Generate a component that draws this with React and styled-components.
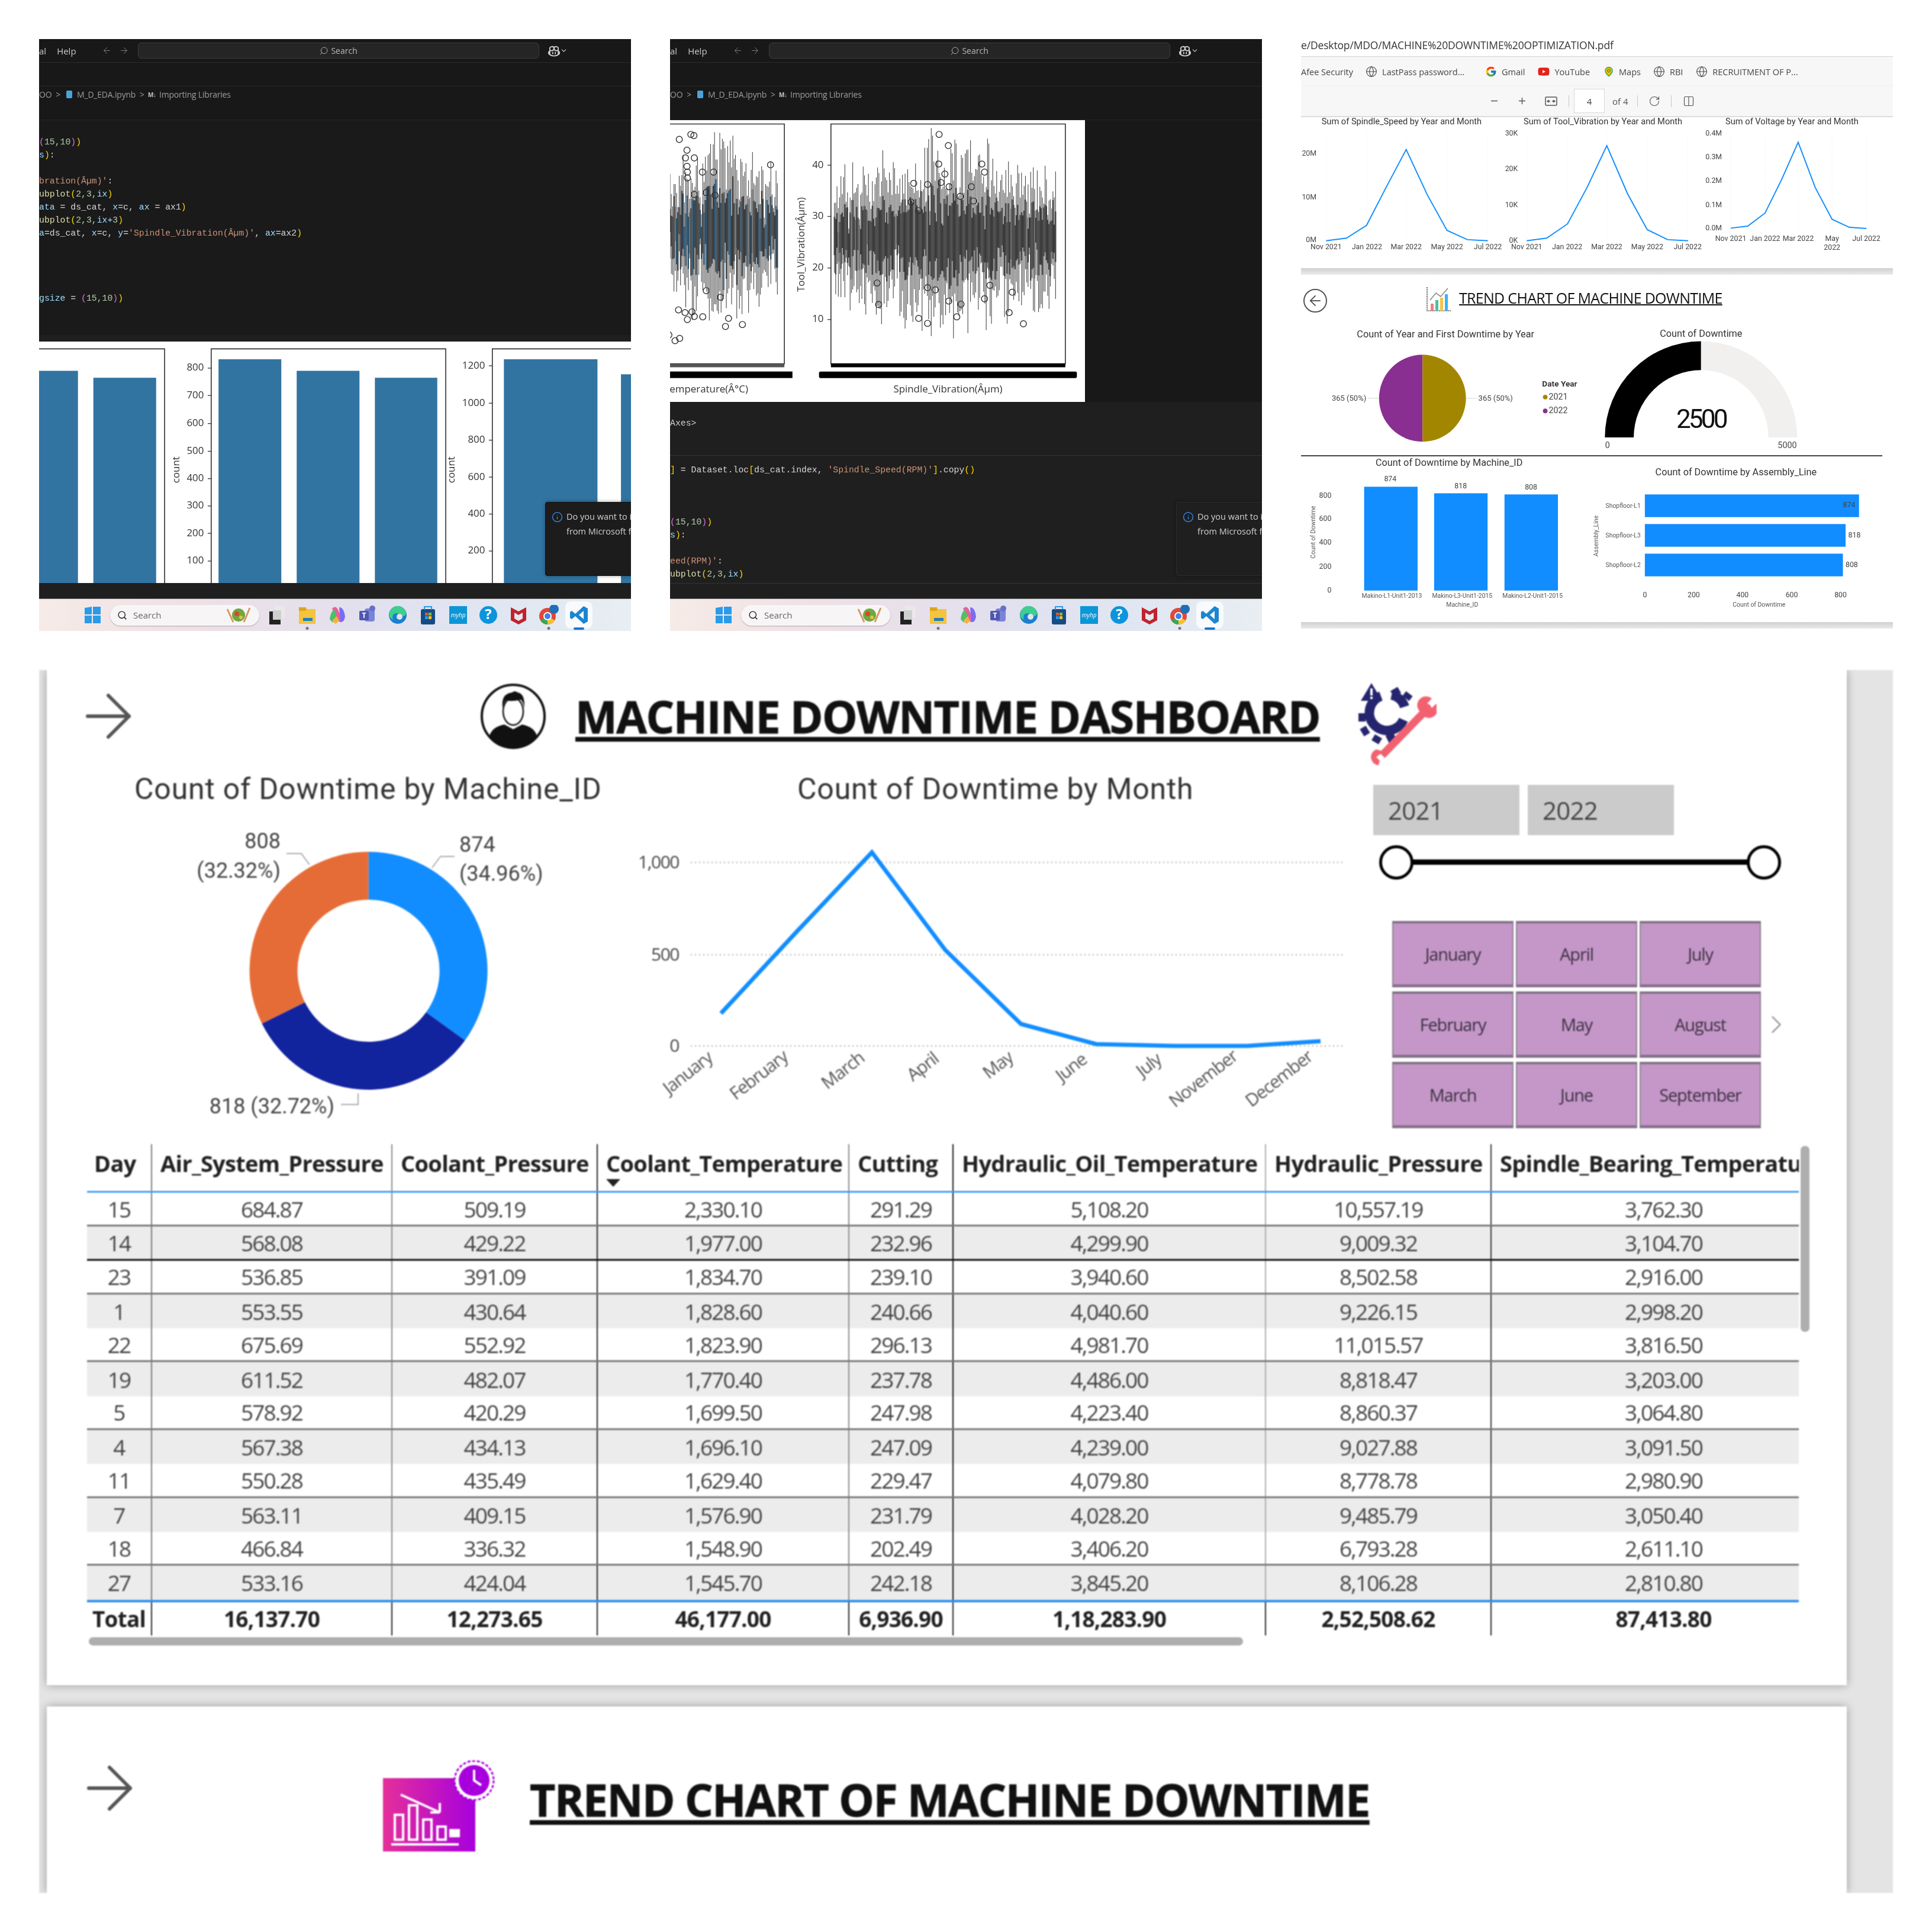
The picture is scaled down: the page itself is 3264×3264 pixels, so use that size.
import React from 'react'
import styled, { createGlobalStyle } from 'styled-components'
import { ArrowRight, ArrowLeft, Search, ChevronDown, ChevronRight, Globe, Minus, Plus, Info, RotateCw, MapPin, Columns2 } from 'lucide-react'
import { VscCopilot } from 'react-icons/vsc'
import { FcGoogle } from 'react-icons/fc'
import { FaYoutube } from 'react-icons/fa'

const GlobalStyle = createGlobalStyle`
  html, body { margin: 0; padding: 0; background: #fff; }
`

const Page = styled.div`
  width: 3264px;
  height: 3264px;
  box-sizing: border-box;
  padding: 66px;
  display: grid;
  grid-template-columns: repeat(3, 1000px);
  grid-template-rows: 1000px 2066px;
  gap: 66px;
  background: #fff;
  font-family: "Open Sans", sans-serif;
`
const Tile = styled.div`
  position: relative;
  overflow: hidden;
  display: flex;
  flex-direction: column;
  background: ${p => p.$bg || '#181818'};
  filter: blur(0.35px);
`

// ---------- vscode window bits ----------
const TitleBar = styled.div`
  height: 40px;
  flex: none;
  box-sizing: border-box;
  display: flex;
  align-items: center;
  color: #c8c8c8;
  font-size: 15px;
  border-bottom: 1px solid #2b2b2b;
`
const MenuText = styled.span`
  margin-left: ${p => p.$gap || 0}px;
`
const NavArrows = styled.div`
  display: flex;
  gap: 12px;
  margin-left: 43px;
  color: #7d7d7d;
`
const SearchBox = styled.div`
  width: 678px;
  height: 27px;
  margin-left: 15px;
  display: flex;
  align-items: center;
  justify-content: center;
  gap: 4px;
  background: #252525;
  border: 1px solid #3c3c3c;
  border-radius: 6px;
  box-sizing: border-box;
  font-size: 14px;
  color: #b8b8b8;
`
const CopilotMenu = styled.div`
  display: flex;
  align-items: center;
  margin-left: 15px;
  color: #cfcfcf;
`
const Blank = styled.div`
  height: 40px;
  flex: none;
  border-bottom: 1px solid #2b2b2b;
  box-sizing: border-box;
`
const Breadcrumb = styled.div`
  height: 57px;
  flex: none;
  box-sizing: border-box;
  padding-bottom: 29px;
  display: flex;
  align-items: center;
  font-size: 14px;
  letter-spacing: -0.2px;
  color: #9d9d9d;
  border-bottom: 1px solid #262626;
  white-space: nowrap;
`
const Crumb = styled.span`
  margin-left: ${p => p.$gap || 0}px;
  display: flex;
  align-items: center;
`
const NotebookIcon = styled.span`
  width: 10px;
  height: 13px;
  border-radius: 2px;
  background: #4aa3d8;
  margin-left: 10px;
`
const MdMark = styled.span`
  font-size: 10px;
  font-weight: 700;
  color: #c8c8c8;
  margin: 0 5px 0 6px;
`
const Editor = styled.div`
  flex: ${p => (p.$fixed ? 'none' : '1')};
  height: ${p => (p.$fixed ? `${p.$fixed}px` : 'auto')};
  box-sizing: border-box;
  padding-top: ${p => p.$top || 0}px;
  background: ${p => p.$bg || '#1a1a1a'};
  border-bottom: ${p => (p.$line ? '1px solid #333' : 'none')};
  overflow: hidden;
`
const CodeLine = styled.div`
  height: 22px;
  line-height: 22px;
  font-family: "Liberation Mono", monospace;
  font-size: 14.8px;
  color: #d4d4d4;
  white-space: pre;
`
const Tok = styled.span`
  color: ${p => p.$c};
`
const DarkStrip = styled.div`
  height: ${p => p.$h}px;
  flex: none;
  background: #1f1f1f;
`
const FigureWrap = styled.div`
  flex: none;
  width: ${p => p.$w}px;
  background: #fff;
`
const ChartSvg = styled.svg`
  display: block;
  flex: none;
  font-family: ${p => p.$font || '"Open Sans", sans-serif'};
  text { dominant-baseline: middle; }
`
const Toast = styled.div`
  position: absolute;
  left: 855px;
  top: 782px;
  width: 200px;
  height: 125px;
  box-sizing: border-box;
  padding: 15px 0 0 10px;
  display: flex;
  gap: 6px;
  background: ${p => p.$bg};
  border: 1px solid ${p => p.$line};
  border-radius: 4px;
  box-shadow: 0 0 6px rgba(0, 0, 0, 0.35);
  color: #cfcfcf;
  font-size: 14.5px;
  line-height: 24.5px;
  white-space: nowrap;
`
const ToastText = styled.div`
  margin-top: -3px;
`

// ---------- taskbar ----------
const TaskBar = styled.div`
  height: 55px;
  flex: none;
  box-sizing: border-box;
  margin-top: auto;
  display: flex;
  align-items: center;
  padding-left: 77px;
  background: linear-gradient(90deg, #f6ebe6 0%, #eee0e6 25%, #e2e0ee 55%, #e0e7f2 80%, #e8eef2 100%);
  border-top: 1px solid #666;
`
const SearchPill = styled.div`
  width: 252px;
  height: 35px;
  margin-left: 16px;
  box-sizing: border-box;
  padding: 0 12px;
  display: flex;
  align-items: center;
  gap: 10px;
  background: #f8f5f7;
  border-radius: 18px;
  box-shadow: 0 1px 2px rgba(0, 0, 0, 0.25);
  font-size: 15px;
  color: #666;
`
const SaladMark = styled.svg`
  margin-left: auto;
`
const TaskIcons = styled.div`
  display: flex;
  gap: 17px;
  margin-left: 13px;
`
const TaskSlot = styled.div`
  position: relative;
  width: 34px;
  height: 34px;
  display: flex;
  align-items: center;
  justify-content: center;
  border-radius: 4px;
  ${p => p.$active && 'background: rgba(255,255,255,.75); box-shadow: 0 0 0 6px rgba(255,255,255,.75);'}
  &::after {
    content: '';
    display: ${p => (p.$dot || p.$active ? 'block' : 'none')};
    position: absolute;
    left: 50%;
    bottom: -8px;
    transform: translateX(-50%);
    width: ${p => (p.$active ? 18 : 5)}px;
    height: ${p => (p.$active ? 4 : 5)}px;
    border-radius: 3px;
    background: ${p => (p.$active ? '#1976d2' : '#777')};
  }
`

const WinLogo = () => (
  <svg width="27" height="28" viewBox="0 0 27 28">
    <path d="M0 2l12-2v13H0zM14 0l13-0v13H14zM0 15h12v13H0zM14 15h13v13H14z" fill="#2a9be8" />
  </svg>
)
const TaskIcon = ({ name }) => {
  const art = {
    view: <><rect x="12" y="2" width="18" height="20" fill="#e9e9e9" /><rect x="4" y="11" width="19" height="22" fill="#222" /><rect x="10" y="9" width="14" height="16" fill="#cfcfcf" /></>,
    folder: <><path d="M3 4h11l3 3h14v25H3z" fill="#f5c33c" /><rect x="3" y="4" width="12" height="6" fill="#dca523" /><rect x="10" y="22" width="16" height="5" fill="#1d7fc4" /></>,
    copilot: <><path d="M8 6q6-6 10 2l8 18q-4 6-10-1z" fill="#e7609c" /><path d="M4 24q2-14 8-16l5 16q-4 6-9 5z" fill="#4fc06a" /><path d="M20 4q8 0 10 16q-2 10-8 9z" fill="#7a6df0" /><path d="M8 27l8-8 4 8-6 5z" fill="#f2b33d" /></>,
    teams: <><rect x="12" y="6" width="17" height="22" rx="4" fill="#7b83d8" /><circle cx="25" cy="6" r="5" fill="#6670c9" /><rect x="3" y="10" width="16" height="16" rx="2" fill="#4f58b0" /><text x="11" y="19" fontSize="12" fontWeight="700" fill="#fff" textAnchor="middle" dominantBaseline="middle">T</text></>,
    edge: <><circle cx="17" cy="17" r="15" fill="#1b7fd0" /><path d="M3 20a14 15 0 0 1 28-6c0 6-8 6-10 3-5-6-16-3-12 8a14 14 0 0 1-6-5z" fill="#3ecf8e" /><circle cx="20" cy="20" r="5" fill="#e0e4f0" /></>,
    store: <><rect x="5" y="7" width="24" height="26" rx="3" fill="#164c86" /><path d="M11 8V3h12v5" fill="none" stroke="#2b9be0" strokeWidth="2" /><rect x="12" y="13" width="5" height="5" fill="#e8532a" /><rect x="18" y="13" width="5" height="5" fill="#7cb83c" /><rect x="12" y="19" width="5" height="5" fill="#2b9be0" /><rect x="18" y="19" width="5" height="5" fill="#f5bd2e" /></>,
    hp: <><rect x="2" y="2" width="30" height="30" fill="#0d96d6" /><text x="17" y="18" fontSize="10" fontStyle="italic" fill="#fff" textAnchor="middle" dominantBaseline="middle">myhp</text></>,
    help: <><circle cx="17" cy="17" r="15" fill="#0d94dc" /><text x="17" y="18" fontSize="24" fontWeight="700" fill="#fff" textAnchor="middle" dominantBaseline="middle">?</text></>,
    mcafee: <path d="M4 4l13 7 13-7v22l-13 7-13-7zM10 13v10l7 4 7-4V13l-7 4z" fill="#c0232c" />,
    chrome: <><circle cx="15" cy="19" r="14" fill="#e0483a" /><path d="M15 19L3 26a14 14 0 0 0 12 7z" fill="#37a853" /><path d="M15 19l12 7a14 14 0 0 1-12 7z" fill="#fbc02d" /><circle cx="15" cy="19" r="7" fill="#fff" /><circle cx="15" cy="19" r="5" fill="#3f7fe8" /><circle cx="26" cy="7" r="8" fill="#1f6fb8" /></>,
    vscode: <><path d="M25 2l7 4v22l-7 4-14-13-6 5-3-2v-10l3-2 6 5zM25 10l-8 7 8 7z" fill="#1b86d1" /></>,
  }
  return <svg width="34" height="34" viewBox="0 0 34 34">{art[name]}</svg>
}

const Taskbar = () => (
  <TaskBar>
    <WinLogo />
    <SearchPill>
      <Search size={17} color="#222" />
      Search
      <SaladMark width="46" height="28" viewBox="0 0 46 28">
        <path d="M4 4l10 22M42 2L32 26" stroke="#d29a63" strokeWidth="3" />
        <circle cx="23" cy="14" r="11" fill="#6fa83e" />
        <circle cx="20" cy="12" r="4" fill="#d9472f" />
        <circle cx="27" cy="18" r="3" fill="#e8c04a" />
      </SaladMark>
    </SearchPill>
    <TaskIcons>
      {['view', 'folder', 'copilot', 'teams', 'edge', 'store', 'hp', 'help', 'mcafee', 'chrome', 'vscode'].map(n => (
        <TaskSlot key={n} $dot={n === 'folder' || n === 'chrome'} $active={n === 'vscode'}>
          <TaskIcon name={n} />
        </TaskSlot>
      ))}
    </TaskIcons>
  </TaskBar>
)

const WindowTop = () => (
  <>
    <TitleBar>
      <MenuText>al</MenuText>
      <MenuText $gap={18}>Help</MenuText>
      <NavArrows>
        <ArrowLeft size={17} strokeWidth={1.4} />
        <ArrowRight size={17} strokeWidth={1.4} />
      </NavArrows>
      <SearchBox>
        <Search size={16} strokeWidth={1.4} style={{ transform: 'scaleX(-1)' }} />
        Search
      </SearchBox>
      <CopilotMenu>
        <VscCopilot size={20} />
        <ChevronDown size={13} />
      </CopilotMenu>
    </TitleBar>
    <Blank />
    <Breadcrumb>
      <Crumb>OO &nbsp;&gt;</Crumb>
      <NotebookIcon />
      <Crumb $gap={8}>M_D_EDA.ipynb &nbsp;&gt;</Crumb>
      <MdMark>M↓</MdMark>
      <Crumb>Importing Libraries</Crumb>
    </Breadcrumb>
  </>
)

const C = { gold: '#ffd700', pink: '#da70d6', blue: '#9cdcfe', fn: '#dcdcaa', str: '#ce9178', num: '#b5cea8', txt: '#d4d4d4', cy: '#4ec9b0' }
const Code = ({ parts }) => (
  <CodeLine>
    {parts.map((p, i) => <Tok key={i} $c={p[1] || C.txt}>{p[0]}</Tok>)}
  </CodeLine>
)

const codeOne = [
  [['(', C.pink], ['15,10', C.num], [')', C.pink], [')', C.gold]],
  [['s', C.blue], [')', C.gold], [':']],
  [[' ']],
  [["bration(Âµm)'", C.str], [':']],
  [['ubplot', C.fn], ['(', C.gold], ['2,3,', C.num], ['ix', C.blue], [')', C.gold]],
  [['ata', C.blue], [' = ds_cat, '], ['x', C.blue], ['=c, '], ['ax', C.blue], [' = ax1'], [')', C.gold]],
  [['ubplot', C.fn], ['(', C.gold], ['2,3,', C.num], ['ix+', C.blue], ['3', C.num], [')', C.gold]],
  [['a', C.blue], ['=ds_cat, '], ['x', C.blue], ['=c, '], ['y', C.blue], ['='], ["'Spindle_Vibration(Âµm)'", C.str], [', '], ['ax', C.blue], ['=ax2'], [')', C.gold]],
  [[' ']], [[' ']], [[' ']], [[' ']],
  [['gsize', C.blue], [' = '], ['(', C.pink], ['15,10', C.num], [')', C.pink], [')', C.gold]],
]
const codeTwo = [
  [[']', C.gold], [' = Dataset.loc'], ['[', C.gold], ['ds_cat.index, '], ["'Spindle_Speed(RPM)'", C.str], [']', C.gold], ['.copy'], ['()', C.gold]],
  [[' ']], [[' ']], [[' ']],
  [['(', C.pink], ['15,10', C.num], [')', C.pink], [')', C.gold]],
  [['s', C.blue], [')', C.gold], [':']],
  [[' ']],
  [["eed(RPM)'", C.str], [':']],
  [['ubplot', C.fn], ['(', C.gold], ['2,3,', C.num], ['ix', C.blue], [')', C.gold]],
]

// ---------- seaborn figures ----------
const BAR = '#3274a1'
const YTick = ({ x, y, label, size = 34 }) => (
  <>
    <line x1={x + 10} x2={x + 20} y1={y} y2={y} stroke="#333" strokeWidth="2" />
    <text x={x} y={y} fontSize={size} fill="#333" textAnchor="end">{label}</text>
  </>
)
const SeabornBars = () => (
  <ChartSvg width="1000" height="408" viewBox="9 795 1537 627">
    <rect x="9" y="795" width="1537" height="627" fill="#fff" />
    <path d="M0 814H335V1422M456 1422V814H1065V1422M1186 1422V814H1546" fill="none" stroke="#333" strokeWidth="2.5" />
    <rect x="9" y="871" width="101" height="551" fill={BAR} />
    <rect x="150" y="889" width="163" height="533" fill={BAR} />
    <rect x="475" y="841" width="163" height="581" fill={BAR} />
    <rect x="678" y="871" width="163" height="551" fill={BAR} />
    <rect x="881" y="889" width="162" height="533" fill={BAR} />
    <rect x="1216" y="841" width="243" height="581" fill={BAR} />
    <rect x="1520" y="880" width="30" height="542" fill={BAR} />
    {[[864, 800], [935, 700], [1008, 600], [1080, 500], [1151, 400], [1222, 300], [1293, 200], [1365, 100]].map(([y, l]) => <YTick key={l} x={437} y={y} label={l} size={26} />)}
    {[[858, 1200], [955, 1000], [1051, 800], [1147, 600], [1243, 400], [1339, 200]].map(([y, l]) => <YTick key={l} x={1167} y={y} label={l} size={26} />)}
    <text transform="translate(367 1128) rotate(-90)" fontSize="26" fill="#333" textAnchor="middle">count</text>
    <text transform="translate(1081 1128) rotate(-90)" fontSize="26" fill="#333" textAnchor="middle">count</text>
  </ChartSvg>
)

const rng = seed => () => {
  seed = (seed + 0x6d2b79f5) | 0
  let t = Math.imul(seed ^ (seed >>> 15), 1 | seed)
  t = (t + Math.imul(t ^ (t >>> 7), 61 | t)) ^ t
  return ((t ^ (t >>> 14)) >>> 0) / 4294967296
}
const makeBoxes = (from, to, mid, spread, seed, tint) => {
  const r = rng(seed)
  const out = []
  for (let x = from; x < to; x += 3.4) {
    const edge = 1 - Math.abs((x - from) / (to - from) - 0.5) * 0.8
    const c = mid + (r() - 0.5) * 60
    const h = (45 + r() * 85) * edge
    const t = c - h - (15 + r() * spread) * edge
    const b = c + h + (15 + r() * spread) * edge
    const light = r() < 0.08
    out.push(
      <g key={x}>
        <line x1={x} x2={x} y1={t} y2={b} stroke="#3d3d3d" strokeWidth="1.6" />
        <rect x={x - 1.7} y={c - h} width="3.4" height={h * 2} fill={light ? '#6e6e6e' : tint && r() > 0.6 ? tint : '#3a3a3a'} />
      </g>
    )
  }
  return out
}
const outL = [[57, 257], [65, 260], [27, 270], [47, 298], [43, 318], [66, 318], [47, 340], [48, 355], [87, 355], [116, 355], [48, 370], [264, 336], [97, 408], [120, 415], [66, 413], [97, 663], [134, 680], [25, 713], [42, 720], [60, 718], [48, 738], [66, 730], [88, 731], [155, 735], [147, 756], [191, 751], [28, 787], [16, 793], [0, 778]]
const outR = [[702, 257], [726, 286], [701, 334], [813, 334], [820, 355], [717, 360], [636, 384], [672, 387], [707, 382], [728, 393], [786, 393], [757, 418], [791, 430], [629, 433], [649, 455], [541, 643], [545, 699], [672, 655], [692, 661], [727, 690], [759, 698], [820, 684], [834, 649], [892, 667], [884, 720], [921, 749], [748, 731], [672, 748], [649, 735]]
const Ring = ({ x, y }) => <circle cx={x} cy={y} r="8" fill="none" stroke="#333" strokeWidth="2.2" />

const BoxFigure = () => (
  <ChartSvg width="701" height="476" viewBox="3 220 1078 732">
    <rect x="3" y="220" width="1078" height="732" fill="#fff" />
    {makeBoxes(3, 285, 510, 140, 7, '#2a4f6a')}
    {makeBoxes(430, 1005, 525, 160, 21)}
    {outL.map(([x, y], i) => <Ring key={i} x={x} y={y} />)}
    {outR.map(([x, y], i) => <Ring key={i} x={x} y={y} />)}
    <path d="M0 230H300V853H0M421 230H1030V853H421z" fill="none" stroke="#333" strokeWidth="2.5" />
    <rect x="3" y="853" width="297" height="9" fill="#555" />
    <rect x="421" y="852" width="609" height="10" fill="#000" />
    <rect x="3" y="873" width="318" height="17" fill="#000" />
    <rect x="390" y="873" width="670" height="17" rx="4" fill="#000" />
    {[[337, 40], [470, 30], [604, 20], [738, 10]].map(([y, l]) => <YTick key={l} x={402} y={y} label={l} size={26} />)}
    <text transform="translate(345 543) rotate(-90)" fontSize="26" fill="#333" textAnchor="middle">Tool_Vibration(Âµm)</text>
    <text x="2" y="921" fontSize="26" fill="#333">emperature(Â°C)</text>
    <text x="725" y="921" fontSize="26" fill="#333" textAnchor="middle">Spindle_Vibration(Âµm)</text>
  </ChartSvg>
)

// ---------- pdf window ----------
const UrlRow = styled.div`
  height: 30px;
  flex: none;
  box-sizing: border-box;
  display: flex;
  align-items: center;
  padding-bottom: 10px;
  font-size: 17.5px;
  letter-spacing: -0.15px;
  color: #333;
  border-bottom: 1px solid #d4d4d4;
  white-space: nowrap;
`
const BookmarkBar = styled.div`
  height: 49px;
  flex: none;
  display: flex;
  align-items: center;
  background: #f7f7f7;
  font-size: 14.5px;
  color: #444;
  white-space: nowrap;
  border-bottom: 1px solid #eee;
  box-sizing: border-box;
  padding-top: 2px;
`
const Bookmark = styled.div`
  display: flex;
  align-items: center;
  gap: 8px;
  margin-left: ${p => p.$gap || 0}px;
`
const PdfBar = styled.div`
  height: 53px;
  flex: none;
  box-sizing: border-box;
  padding-left: 318px;
  display: flex;
  align-items: center;
  background: #f7f7f7;
  border-bottom: 2px solid #dcdcdc;
  font-size: 15px;
  color: #555;
`
const PdfTool = styled.div`
  display: flex;
  margin-left: ${p => p.$gap || 0}px;
  color: #555;
`
const PdfSep = styled.div`
  width: 1px;
  height: 20px;
  background: #c8c8c8;
  margin-left: ${p => p.$gap || 0}px;
`
const PageBox = styled.div`
  width: 52px;
  height: 41px;
  margin-left: 8px;
  display: flex;
  align-items: center;
  justify-content: center;
  background: #fff;
  border: 1px solid #d8d8d8;
  box-sizing: border-box;
  color: #444;
`
const PdfBand = styled.div`
  height: ${p => p.$h}px;
  flex: none;
  background: linear-gradient(#d0d0d0, #eaeaea);
`
const PdfHead = styled.div`
  height: 71px;
  flex: none;
  box-sizing: border-box;
  padding: 21px 0 0 4px;
  display: flex;
  align-items: flex-start;
  background: #fff;
`
const BackCircle = styled.div`
  width: 40px;
  height: 40px;
  margin-top: 3px;
  box-sizing: border-box;
  border: 2px solid #555;
  border-radius: 50%;
  display: flex;
  align-items: center;
  justify-content: center;
  color: #444;
`
const PdfHeadIcon = styled.svg`
  margin-left: 166px;
`
const PdfHeading = styled.div`
  margin-left: 13px;
  font-size: 25px;
  line-height: 36px;
  letter-spacing: -0.7px;
  color: #111;
  text-decoration: underline;
  text-decoration-thickness: 2px;
  white-space: nowrap;
`
const PdfRule = styled.div`
  height: 2px;
  flex: none;
  width: 982px;
  background: #444;
`
const PdfSection = styled.div`
  background: #fff;
  flex: none;
`

const BLUE = '#118dff'
const MiniLine = ({ title, tx, pts, yl, yr, xl, xy }) => (
  <>
    <text x={tx} y="226" fontSize="22.5" fill="#333" textAnchor="middle">{title}</text>
    {xl.map(([x]) => <line key={x} x1={x} x2={x} y1="255" y2="534" stroke="#eee" strokeWidth="1.5" strokeDasharray="2 4" />)}
    {yl.map(([y, l]) => <text key={l} x={yr} y={y} fontSize="19" fill="#444" textAnchor="end">{l}</text>)}
    {xl.map(([x, l, l2]) => (
      <React.Fragment key={x}>
        <text x={x} y={xy} fontSize="19" fill="#444" textAnchor="middle">{l}</text>
        {l2 && <text x={x} y={xy + 24} fontSize="19" fill="#444" textAnchor="middle">{l2}</text>}
      </React.Fragment>
    ))}
    <polyline points={pts} fill="none" stroke={BLUE} strokeWidth="3" />
  </>
)

const TrendRow = () => (
  <ChartSvg width="1000" height="255" viewBox="12 213 1537 392" $font='"Roboto", sans-serif'>
    <MiniLine title="Sum of Spindle_Speed by Year and Month" tx={273} yr={52} xy={551}
      pts="77,534 130,527 182,494 233,395 285,297 340,415 391,507 444,531 497,534"
      yl={[[308, '20M'], [421, '10M'], [533, '0M']]}
      xl={[[77, 'Nov 2021'], [183, 'Jan 2022'], [285, 'Mar 2022'], [391, 'May 2022'], [497, 'Jul 2022']]} />
    <MiniLine title="Sum of Tool_Vibration by Year and Month" tx={796} yr={575} xy={551}
      pts="598,534 650,527 704,490 755,395 806,287 860,412 911,505 964,531 1017,534"
      yl={[[256, '30K'], [348, '20K'], [441, '10K'], [534, '0K']]}
      xl={[[598, 'Nov 2021'], [703, 'Jan 2022'], [806, 'Mar 2022'], [911, 'May 2022'], [1016, 'Jul 2022']]} />
    <MiniLine title="Sum of Voltage by Year and Month" tx={1287} yr={1105} xy={529}
      pts="1128,501 1172,496 1217,462 1260,375 1303,278 1347,395 1391,478 1436,499 1480,502"
      yl={[[256, '0.4M'], [317, '0.3M'], [379, '0.2M'], [441, '0.1M'], [501, '0.0M']]}
      xl={[[1128, 'Nov 2021'], [1217, 'Jan 2022'], [1303, 'Mar 2022'], [1391, 'May', '2022'], [1480, 'Jul 2022']]} />
  </ChartSvg>
)

const PieGaugeRow = () => (
  <ChartSvg width="1000" height="234" viewBox="12 730 1537 360" $font='"Roboto", sans-serif'>
    <text x="387" y="777" fontSize="25" fill="#333" textAnchor="middle">Count of Year and First Downtime by Year</text>
    <path d="M327 829a113 113 0 0 0 0 226z" fill="#892f91" />
    <path d="M327 829a113 113 0 0 1 0 226z" fill="#a38600" />
    <line x1="186" x2="214" y1="942" y2="942" stroke="#bbb" />
    <line x1="440" x2="470" y1="942" y2="942" stroke="#bbb" />
    <text x="136" y="943" fontSize="20" fill="#444" textAnchor="middle">365 (50%)</text>
    <text x="517" y="943" fontSize="20" fill="#444" textAnchor="middle">365 (50%)</text>
    <text x="638" y="906" fontSize="21" fontWeight="700" fill="#333">Date Year</text>
    <circle cx="646" cy="939" r="6" fill="#a38600" />
    <circle cx="646" cy="975" r="6" fill="#892f91" />
    <text x="655" y="939" fontSize="22" fill="#444">2021</text>
    <text x="655" y="975" fontSize="22" fill="#444">2022</text>
    <text x="1051" y="776" fontSize="25" fill="#333" textAnchor="middle">Count of Downtime</text>
    <path d="M801 1044a250 250 0 0 1 250-250v75a175 175 0 0 0-175 175z" fill="#000" />
    <path d="M1051 794a250 250 0 0 1 250 250h-75a175 175 0 0 0-175-175z" fill="#f1f0ef" />
    <text x="1051" y="1001" fontSize="68" fill="#111" textAnchor="middle" letterSpacing="-6">2500</text>
    <text x="808" y="1066" fontSize="22" fill="#444" textAnchor="middle">0</text>
    <text x="1275" y="1066" fontSize="22" fill="#444" textAnchor="middle">5000</text>
  </ChartSvg>
)

const BarsRow = () => (
  <ChartSvg width="1000" height="280" viewBox="12 1095 1537 431" $font='"Roboto", sans-serif'>
    <text x="396" y="1113" fontSize="25" fill="#333" textAnchor="middle">Count of Downtime by Machine_ID</text>
    <rect x="175" y="1174" width="139" height="270" fill={BLUE} />
    <rect x="357" y="1191" width="139" height="253" fill={BLUE} />
    <rect x="540" y="1194" width="139" height="250" fill={BLUE} />
    {[[243, 1155, 874], [426, 1173, 818], [609, 1176, 808]].map(([x, y, l]) => <text key={l} x={x} y={y} fontSize="19" fill="#444" textAnchor="middle">{l}</text>)}
    {[[1197, 800], [1258, 600], [1320, 400], [1382, 200], [1444, 0]].map(([y, l]) => <text key={l} x="90" y={y} fontSize="19" fill="#444" textAnchor="end">{l}</text>)}
    <text transform="translate(43 1292) rotate(-90)" fontSize="16" fill="#555" textAnchor="middle">Count of Downtime</text>
    {[[247, 'Makino-L1-Unit1-2013'], [430, 'Makino-L3-Unit1-2015'], [613, 'Makino-L2-Unit1-2015']].map(([x, l]) => <text key={l} x={x} y="1458" fontSize="16" fill="#555" textAnchor="middle">{l}</text>)}
    <text x="430" y="1482" fontSize="16" fill="#555" textAnchor="middle">Machine_ID</text>
    <text x="1142" y="1138" fontSize="25" fill="#333" textAnchor="middle">Count of Downtime by Assembly_Line</text>
    <rect x="905" y="1194" width="557" height="59" fill={BLUE} />
    <rect x="905" y="1271" width="522" height="59" fill={BLUE} />
    <rect x="905" y="1348" width="515" height="59" fill={BLUE} />
    {[[1436, 1223, 874], [1450, 1301, 818], [1443, 1378, 808]].map(([x, y, l]) => <text key={l} x={x} y={y} fontSize="19" fill="#444" textAnchor="middle">{l}</text>)}
    {[[1224, 'Shopfloor-L1'], [1302, 'Shopfloor-L3'], [1379, 'Shopfloor-L2']].map(([y, l]) => <text key={l} x="894" y={y} fontSize="16" fill="#555" textAnchor="end">{l}</text>)}
    {[[905, 0], [1032, 200], [1159, 400], [1287, 600], [1414, 800]].map(([x, l]) => <text key={l} x={x} y="1456" fontSize="19" fill="#444" textAnchor="middle">{l}</text>)}
    <text x="1202" y="1482" fontSize="16" fill="#555" textAnchor="middle">Count of Downtime</text>
    <text transform="translate(780 1302) rotate(-90)" fontSize="16" fill="#555" textAnchor="middle">Assembly_Line</text>
  </ChartSvg>
)

// ---------- main dashboard ----------
const Shot = styled.div`
  grid-column: 1 / 4;
  display: flex;
  flex-direction: column;
  padding: 0 78px 0 13px;
  background: #e4e4e4;
  overflow: hidden;
  filter: blur(0.9px);
`
const Panel = styled.div`
  flex: none;
  height: ${p => p.$h}px;
  background: #fff;
  box-shadow: 0 0 14px rgba(0, 0, 0, 0.32);
  position: relative;
  box-sizing: border-box;
`
const ShotGap = styled.div`
  height: 36px;
  flex: none;
`
const HeaderRow = styled.div`
  height: 156px;
  display: flex;
  align-items: center;
  padding-left: 44px;
`
const Heading = styled.div`
  margin-left: ${p => p.$gap}px;
  font-size: ${p => p.$size}px;
  font-weight: 700;
  letter-spacing: ${p => p.$ls}px;
  -webkit-text-stroke: 1px #111;
  color: #111;
  white-space: nowrap;
  text-decoration: underline;
  text-decoration-thickness: 8px;
  text-underline-offset: 6px;
  line-height: 1.2;
`
const Avatar = styled.svg`
  margin-left: 568px;
`
const GearLogo = styled.svg`
  margin: 28px 0 0 63px;
`
const ChartsRow = styled.div`
  height: 645px;
  display: grid;
  grid-template-columns: 960px 1260px 1fr;
`
const ChartCol = styled.div`
  display: flex;
  flex-direction: column;
`
const ChartTitle = styled.div`
  height: 90px;
  line-height: 90px;
  padding-left: ${p => p.$pad}px;
  font-family: "Roboto", sans-serif;
  font-size: 50px;
  letter-spacing: 0.8px;
  color: #333;
  white-space: nowrap;
`
const SlicerCol = styled.div`
  padding: 38px 0 0 21px;
`
const YearRow = styled.div`
  display: flex;
  gap: 14px;
`
const YearBox = styled.div`
  width: 247px;
  height: 85px;
  box-sizing: border-box;
  padding-left: 25px;
  display: flex;
  align-items: center;
  background: #cbcbcb;
  font-size: 42px;
  letter-spacing: -0.8px;
  color: #444;
`
const SliderTrack = styled.div`
  width: 621px;
  height: 9px;
  margin: 41px 0 0 39px;
  background: #000;
  display: flex;
  align-items: center;
  justify-content: space-between;
`
const SliderHandle = styled.div`
  flex: none;
  width: 58px;
  height: 58px;
  margin: 0 -29px;
  box-sizing: border-box;
  background: #fff;
  border: 5px solid #000;
  border-radius: 50%;
`
const MonthArea = styled.div`
  display: flex;
  align-items: center;
  margin: 95px 0 0 32px;
`
const MonthGrid = styled.div`
  display: grid;
  grid-template-columns: repeat(3, 205px);
  grid-auto-rows: 112px;
  gap: 7px 4px;
`
const MonthCell = styled.div`
  display: flex;
  align-items: center;
  justify-content: center;
  background: #c497c8;
  box-sizing: border-box;
  border: 2px solid #8d7f90;
  border-top: 4px solid #807084;
  border-bottom: 5px solid #86708a;
  font-size: 29px;
  letter-spacing: -1.2px;
  color: #3c3040;
`
const TableWrap = styled.div`
  position: relative;
  margin-left: 68px;
  width: 2892px;
`
const COLS = '110px 406px 347px 425px 176px 528px 381px 519px'
const Row = styled.div`
  display: grid;
  grid-template-columns: ${COLS};
  height: ${p => p.$h}px;
  box-sizing: border-box;
  background: ${p => p.$bg || '#fff'};
  border-bottom: ${p => (p.$line ? `3px solid ${p.$line}` : 'none')};
  border-top: ${p => (p.$top ? `4px solid ${p.$top}` : 'none')};
`
const Cell = styled.div`
  position: relative;
  display: flex;
  align-items: center;
  justify-content: ${p => (p.$left ? 'flex-start' : 'center')};
  box-sizing: border-box;
  padding-left: ${p => p.$pad || 0}px;
  padding-bottom: ${p => (p.$head ? 16 : 0)}px;
  border-right: ${p => (p.$div ? `2px solid ${p.$div}` : 'none')};
  font-size: ${p => (p.$head ? 38 : 37)}px;
  font-weight: ${p => (p.$strong ? 700 : 400)};
  letter-spacing: ${p => (p.$head ? -0.7 : p.$strong ? -0.8 : -1.9)}px;
  color: ${p => (p.$strong ? '#222' : '#444')};
  white-space: nowrap;
  overflow: hidden;
`
const SortMark = styled.span`
  position: absolute;
  left: 14px;
  bottom: 7px;
  width: 0;
  height: 0;
  border-left: 12px solid transparent;
  border-right: 12px solid transparent;
  border-top: 13px solid #222;
`
const HScroll = styled.div`
  width: 1950px;
  height: 14px;
  margin: 3px 0 0 3px;
  border-radius: 7px;
  background: #aeaeae;
`
const VScroll = styled.div`
  position: absolute;
  left: 2895px;
  top: 3px;
  width: 15px;
  height: 314px;
  border-radius: 7px;
  background: #aeaeae;
`
const SecondHead = styled.div`
  display: flex;
  align-items: flex-start;
  padding-left: 46px;
`
const ArrowSlot = styled.div`
  margin-top: ${p => p.$top}px;
  color: #555;
  display: flex;
`
const TrendIcon = styled.svg`
  margin: 91px 0 0 402px;
`
const SecondTitle = styled.div`
  margin-top: 112px;
`

const head = ['Day', 'Air_System_Pressure', 'Coolant_Pressure', 'Coolant_Temperature', 'Cutting', 'Hydraulic_Oil_Temperature', 'Hydraulic_Pressure', 'Spindle_Bearing_Temperature']
const rows = [
  ['15', '684.87', '509.19', '2,330.10', '291.29', '5,108.20', '10,557.19', '3,762.30'],
  ['14', '568.08', '429.22', '1,977.00', '232.96', '4,299.90', '9,009.32', '3,104.70'],
  ['23', '536.85', '391.09', '1,834.70', '239.10', '3,940.60', '8,502.58', '2,916.00'],
  ['1', '553.55', '430.64', '1,828.60', '240.66', '4,040.60', '9,226.15', '2,998.20'],
  ['22', '675.69', '552.92', '1,823.90', '296.13', '4,981.70', '11,015.57', '3,816.50'],
  ['19', '611.52', '482.07', '1,770.40', '237.78', '4,486.00', '8,818.47', '3,203.00'],
  ['5', '578.92', '420.29', '1,699.50', '247.98', '4,223.40', '8,860.37', '3,064.80'],
  ['4', '567.38', '434.13', '1,696.10', '247.09', '4,239.00', '9,027.88', '3,091.50'],
  ['11', '550.28', '435.49', '1,629.40', '229.47', '4,079.80', '8,778.78', '2,980.90'],
  ['7', '563.11', '409.15', '1,576.90', '231.79', '4,028.20', '9,485.79', '3,050.40'],
  ['18', '466.84', '336.32', '1,548.90', '202.49', '3,406.20', '6,793.28', '2,611.10'],
  ['27', '533.16', '424.04', '1,545.70', '242.18', '3,845.20', '8,106.28', '2,810.80'],
]
const total = ['Total', '16,137.70', '12,273.65', '46,177.00', '6,936.90', '1,18,283.90', '2,52,508.62', '87,413.80']
const dividers = ['#777', '#888', '#222', '#888', '#111', '#aaa', '#333', null]
const rowLine = i => (i === 1 ? '#111' : i % 2 === 0 && i !== 12 ? '#777' : null)

const DataTable = () => (
  <TableWrap>
    <Row $h={82} $line="#3f9cf0">
      {head.map((h, i) => (
        <Cell key={h} $head $strong $left $pad={i === 0 ? 12 : 14} $div={dividers[i]}>
          {h}
          {h === 'Coolant_Temperature' && <SortMark />}
        </Cell>
      ))}
    </Row>
    {rows.map((r, i) => (
      <Row key={r[0]} $h={57.3} $bg={i % 2 ? '#ececec' : '#fff'} $line={rowLine(i)}>
        {r.map((v, j) => <Cell key={j} $div={dividers[j]} $pad={j === 7 ? 62 : 0}>{v}</Cell>)}
      </Row>
    ))}
    <Row $h={60} $top="#2a8fef">
      {total.map((v, j) => <Cell key={j} $strong $div={j < 7 ? '#222' : null} $pad={j === 7 ? 62 : 0}>{v}</Cell>)}
    </Row>
    <HScroll />
    <VScroll />
  </TableWrap>
)

const polar = (cx, cy, r, a) => [cx + r * Math.cos(a), cy + r * Math.sin(a)]
const ringSlice = (cx, cy, R, r, from, to) => {
  const a0 = -Math.PI / 2 + from * 2 * Math.PI
  const a1 = -Math.PI / 2 + to * 2 * Math.PI
  const big = to - from > 0.5 ? 1 : 0
  const [x0, y0] = polar(cx, cy, R, a0)
  const [x1, y1] = polar(cx, cy, R, a1)
  const [x2, y2] = polar(cx, cy, r, a1)
  const [x3, y3] = polar(cx, cy, r, a0)
  return `M${x0} ${y0}A${R} ${R} 0 ${big} 1 ${x1} ${y1}L${x2} ${y2}A${r} ${r} 0 ${big} 0 ${x3} ${y3}Z`
}
const Donut = () => (
  <ChartSvg width="960" height="555" viewBox="79 1378 960 555" $font='"Roboto", sans-serif'>
    <path d={ringSlice(622.6, 1640, 201, 120, 0, 0.3496)} fill="#118dff" />
    <path d={ringSlice(622.6, 1640, 201, 120, 0.3496, 0.6768)} fill="#12239e" />
    <path d={ringSlice(622.6, 1640, 201, 120, 0.6768, 1)} fill="#e66c37" />
    <path d="M744 1447H768M744 1447L730 1466M484 1442H509L523 1461M576 1866H605V1847" fill="none" stroke="#aaa" strokeWidth="2" />
    <text x="474" y="1423" fontSize="36" fill="#444" textAnchor="end">808</text>
    <text x="474" y="1473" fontSize="36" fill="#444" textAnchor="end">(32.32%)</text>
    <text x="776" y="1429" fontSize="36" fill="#444">874</text>
    <text x="776" y="1478" fontSize="36" fill="#444">(34.96%)</text>
    <text x="565" y="1871" fontSize="36" fill="#444" textAnchor="end">818 (32.72%)</text>
  </ChartSvg>
)
const linePts = '1218,1712 1346,1574 1473,1440 1597,1605 1725,1730 1852,1764 1983,1767 2107,1767 2231,1759'
const monthLabels = [[1163, 1814, 'January'], [1283, 1818, 'February'], [1425, 1810, 'March'], [1560, 1804, 'April'], [1687, 1801, 'May'], [1811, 1805, 'June'], [1942, 1801, 'July'], [2034, 1824, 'November'], [2162, 1824, 'December']]
const MonthLine = () => (
  <ChartSvg width="1260" height="555" viewBox="1039 1378 1260 555">
    {[[1457, '1,000'], [1613, '500'], [1767, '0']].map(([y, l]) => (
      <React.Fragment key={l}>
        <line x1="1167" x2="2272" y1={y} y2={y} stroke="#b5b5b5" strokeWidth="2.5" strokeDasharray="2 5" />
        <text x="1147" y={y + 2} fontSize="30" letterSpacing="-1.5" fill="#444" textAnchor="end">{l}</text>
      </React.Fragment>
    ))}
    <polyline points={linePts} fill="none" stroke="#118dff" strokeWidth="7" strokeLinejoin="miter" />
    {monthLabels.map(([x, y, l]) => (
      <text key={l} transform={`translate(${x} ${y}) rotate(-38)`} fontSize="30" letterSpacing="-1.4" fill="#555" textAnchor="middle">{l}</text>
    ))}
  </ChartSvg>
)

const AvatarArt = () => (
  <Avatar width="112" height="112" viewBox="0 0 112 112">
    <circle cx="56" cy="56" r="53" fill="#fff" stroke="#111" strokeWidth="4" />
    <path d="M15 92q4-18 26-22l15 8 15-8q22 4 26 22a53 53 0 0 1-82 0z" fill="#111" />
    <ellipse cx="56" cy="48" rx="17" ry="23" fill="#fff" stroke="#111" strokeWidth="2.5" />
    <path d="M38 42q-3-24 16-26q4-4 10 0q12 2 11 26q-2-10-6-14q-16 4-25 1q-4 5-6 13z" fill="#111" />
  </Avatar>
)
const GearArt = () => (
  <GearLogo width="134" height="140" viewBox="0 0 134 140">
    <g fill="none" stroke="#25256f">
      <path d="M40 22a30 30 0 1 0 38 40" strokeWidth="16" />
      <path d="M62 10l6 10M82 26l6-8M2 58h12M8 84l10-6M30 100l6-10M60 98l-6-12" strokeWidth="14" />
      <path d="M58 20a30 30 0 0 1 22 20" strokeWidth="16" />
    </g>
    <path d="M24 0l18 30H6z" fill="#25256f" />
    <rect x="22" y="9" width="4" height="12" fill="#fff" />
    <rect x="22" y="23" width="4" height="4" fill="#fff" />
    <path d="M42 122L114 48" stroke="#f2616f" strokeWidth="13" fill="none" />
    <path d="M122 36a13 13 0 0 0-4-1l8-9a15 15 0 0 0-22 20l8 10a15 15 0 0 0 21-21l-7 7z" fill="#f2616f" />
    <path d="M32 112a14 14 0 0 0 4 27l2-8-6-6 8-6 7 4 3-6z" fill="#f2616f" />
  </GearLogo>
)
const TrendArt = () => (
  <TrendIcon width="190" height="160" viewBox="0 0 190 160">
    <defs>
      <linearGradient id="mag" x1="0" x2="1">
        <stop offset="0" stopColor="#e52f9a" />
        <stop offset="1" stopColor="#a700dd" />
      </linearGradient>
    </defs>
    <rect x="0" y="30" width="156" height="124" fill="url(#mag)" />
    <g fill="none" stroke="#fff" strokeWidth="4">
      <rect x="20" y="92" width="14" height="42" />
      <rect x="44" y="76" width="14" height="58" />
      <rect x="68" y="100" width="14" height="34" />
      <rect x="92" y="112" width="14" height="22" />
      <path d="M14 142H128M30 58L96 88M96 88v-16M96 88H80" />
      <rect x="114" y="118" width="14" height="10" fill="#fff" />
    </g>
    <circle cx="154" cy="34" r="33" fill="#fff" stroke="#a700dd" strokeWidth="3" strokeDasharray="5 3" />
    <circle cx="154" cy="34" r="26" fill="#a700dd" />
    <path d="M154 16v18l12 8" fill="none" stroke="#fff" strokeWidth="4" />
  </TrendIcon>
)
const GrowthIcon = () => (
  <PdfHeadIcon width="44" height="46" viewBox="0 0 44 46">
    <path d="M3 0v40h40" fill="none" stroke="#555" strokeWidth="1.6" strokeDasharray="2 1" />
    <rect x="9" y="28" width="5" height="12" fill="#ef7f86" />
    <rect x="17" y="22" width="5" height="18" fill="#46c3a6" />
    <rect x="25" y="18" width="5" height="22" fill="#f4c34d" />
    <rect x="33" y="12" width="5" height="28" fill="#3cb4ef" />
    <path d="M8 22l10-12 8 6 12-14" fill="none" stroke="#888" strokeWidth="1.6" />
  </PdfHeadIcon>
)
const FitWidthIcon = () => (
  <svg width="21" height="16" viewBox="0 0 21 16" fill="none" stroke="#555" strokeWidth="1.5">
    <rect x="1" y="1" width="19" height="14" rx="1.5" />
    <path d="M4 8h5M7 6L4 8l3 2M17 8h-5M14 6l3 2-3 2" />
  </svg>
)

const App = () => (
  <>
    <GlobalStyle />
    <Page>
      <Tile>
        <WindowTop />
        <Editor $fixed={363} $top={26}>
          {codeOne.map((l, i) => <Code key={i} parts={l} />)}
        </Editor>
        <DarkStrip $h={11} />
        <SeabornBars />
        <DarkStrip $h={26} />
        <Taskbar />
        <Toast $bg="#1c1c1c" $line="#111">
          <Info size={19} color="#3794ff" strokeWidth={1.6} />
          <ToastText>Do you want to install<br />from Microsoft for</ToastText>
        </Toast>
      </Tile>

      <Tile>
        <WindowTop />
        <FigureWrap $w={701}><BoxFigure /></FigureWrap>
        <Editor $fixed={91} $top={25} $bg="#1f1f1f" $line>
          <Code parts={[['Axes>', '#cccccc']]} />
        </Editor>
        <Editor $fixed={216} $top={13} $bg="#1f1f1f" $line>
          {codeTwo.map((l, i) => <Code key={i} parts={l} />)}
        </Editor>
        <DarkStrip $h={25} />
        <Taskbar />
        <Toast $bg="#1f1f1f" $line="#2c2c2c">
          <Info size={19} color="#3794ff" strokeWidth={1.6} />
          <ToastText>Do you want to install<br />from Microsoft for</ToastText>
        </Toast>
      </Tile>

      <Tile $bg="#fff">
        <UrlRow>e/Desktop/MDO/MACHINE%20DOWNTIME%20OPTIMIZATION.pdf</UrlRow>
        <BookmarkBar>
          <Bookmark>Afee Security</Bookmark>
          <Bookmark $gap={21}><Globe size={20} strokeWidth={1.3} />LastPass password...</Bookmark>
          <Bookmark $gap={35}><FcGoogle size={20} />Gmail</Bookmark>
          <Bookmark $gap={22}><FaYoutube size={20} color="#e62117" />YouTube</Bookmark>
          <Bookmark $gap={23}><MapPin size={18} color="#34a853" fill="#fbbc04" />Maps</Bookmark>
          <Bookmark $gap={21}><Globe size={20} strokeWidth={1.3} />RBI</Bookmark>
          <Bookmark $gap={22}><Globe size={20} strokeWidth={1.3} />RECRUITMENT OF P...</Bookmark>
        </BookmarkBar>
        <PdfBar>
          <PdfTool><Minus size={17} /></PdfTool>
          <PdfTool $gap={30}><Plus size={17} /></PdfTool>
          <PdfTool $gap={30}><FitWidthIcon /></PdfTool>
          <PdfSep $gap={19} />
          <PageBox>4</PageBox>
          <PdfTool $gap={13}>of 4</PdfTool>
          <PdfSep $gap={15} />
          <PdfTool $gap={18}><RotateCw size={20} strokeWidth={1.4} /></PdfTool>
          <PdfSep $gap={18} />
          <PdfTool $gap={19}><Columns2 size={20} strokeWidth={1.4} /></PdfTool>
        </PdfBar>
        <PdfSection><TrendRow /></PdfSection>
        <PdfBand $h={11} />
        <PdfSection>
          <PdfHead>
            <BackCircle><ArrowLeft size={28} strokeWidth={1.5} /></BackCircle>
            <GrowthIcon />
            <PdfHeading>TREND CHART OF MACHINE DOWNTIME</PdfHeading>
          </PdfHead>
          <PieGaugeRow />
          <PdfRule />
          <BarsRow />
        </PdfSection>
        <PdfBand $h={11} />
      </Tile>

      <Shot>
        <Panel $h={1715}>
          <HeaderRow>
            <ArrowRight size={120} strokeWidth={1.2} color="#555" />
            <AvatarArt />
            <Heading $gap={49} $size={75} $ls={-1.5}>MACHINE DOWNTIME DASHBOARD</Heading>
            <GearArt />
          </HeaderRow>
          <ChartsRow>
            <ChartCol>
              <ChartTitle $pad={148}>Count of Downtime by Machine_ID</ChartTitle>
              <Donut />
            </ChartCol>
            <ChartCol>
              <ChartTitle $pad={308}>Count of Downtime by Month</ChartTitle>
              <MonthLine />
            </ChartCol>
            <SlicerCol>
              <YearRow>
                <YearBox>2021</YearBox>
                <YearBox>2022</YearBox>
              </YearRow>
              <SliderTrack>
                <SliderHandle />
                <SliderHandle />
              </SliderTrack>
              <MonthArea>
                <MonthGrid>
                  {['January', 'April', 'July', 'February', 'May', 'August', 'March', 'June', 'September'].map(m => <MonthCell key={m}>{m}</MonthCell>)}
                </MonthGrid>
                <ChevronRight size={52} strokeWidth={1} color="#888" />
              </MonthArea>
            </SlicerCol>
          </ChartsRow>
          <DataTable />
        </Panel>
        <ShotGap />
        <Panel $h={315}>
          <SecondHead>
            <ArrowSlot $top={78}><ArrowRight size={120} strokeWidth={1.2} /></ArrowSlot>
            <TrendArt />
            <SecondTitle>
              <Heading $gap={58} $size={75} $ls={-1.5}>TREND CHART OF MACHINE DOWNTIME</Heading>
            </SecondTitle>
          </SecondHead>
        </Panel>
      </Shot>
    </Page>
  </>
)

export default App
